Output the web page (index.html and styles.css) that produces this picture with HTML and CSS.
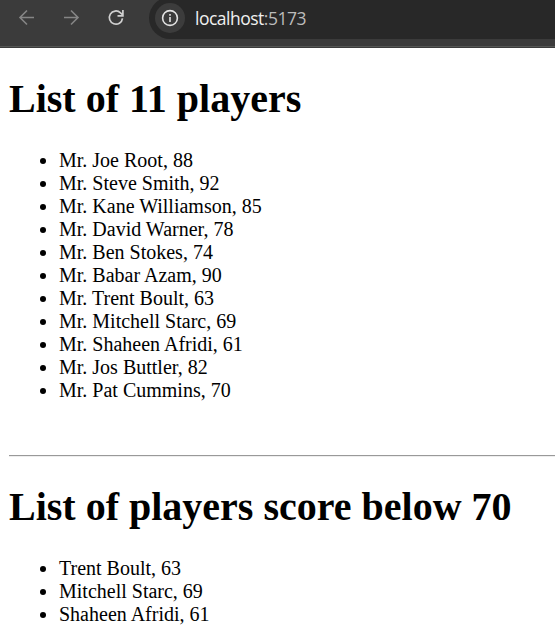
FILE: index.html
```html
<!DOCTYPE html>
<html lang="en">
<head>
<meta charset="utf-8">
<title>Players</title>
<link rel="stylesheet" href="styles.css">
</head>
<body>
<header class="toolbar">
  <svg class="nav" viewBox="0 0 20 20"><path d="M17 9.5H3M10 2.5l-7 7 7 7"/></svg>
  <svg class="nav" viewBox="0 0 20 20"><path d="M2 9.5h14M9 2.5l7 7-7 7"/></svg>
  <svg class="nav reload" viewBox="0 0 20 20"><path d="M16.5 10.4a6.6 6.6 0 1 1-2-5.6L16.7 7M16.9 2v5.8h-5.4"/></svg>
  <div class="address">
    <span class="info"><svg viewBox="0 0 20 20"><circle cx="10" cy="10" r="7.4"/><path d="M10 9v5M10 6v1.8"/></svg></span>
    <span class="url">localhost<span class="port">:5173</span></span>
  </div>
</header>
<main class="page">
  <h1>List of 11 players</h1>
  <ul>
    <li>Mr. Joe Root, 88</li>
    <li>Mr. Steve Smith, 92</li>
    <li>Mr. Kane Williamson, 85</li>
    <li>Mr. David Warner, 78</li>
    <li>Mr. Ben Stokes, 74</li>
    <li>Mr. Babar Azam, 90</li>
    <li>Mr. Trent Boult, 63</li>
    <li>Mr. Mitchell Starc, 69</li>
    <li>Mr. Shaheen Afridi, 61</li>
    <li>Mr. Jos Buttler, 82</li>
    <li>Mr. Pat Cummins, 70</li>
  </ul>
  <hr>
  <h1 class="second">List of players score below 70</h1>
  <ul>
    <li>Trent Boult, 63</li>
    <li>Mitchell Starc, 69</li>
    <li>Shaheen Afridi, 61</li>
  </ul>
</main>
</body>
</html>
```

FILE: styles.css
```css
body {
  margin: 0;
  height: 644px;
  overflow: hidden;
  background: #fff;
  color: #000;
  font: 20px/23px "Liberation Serif", "Times New Roman", serif;
}
.toolbar {
  display: flex;
  align-items: flex-start;
  height: 48px;
  background: linear-gradient(#3b3b3b 46px, #545654 46px, #545654 47px, #3b3b3b 47px);
}
.nav {
  width: 20px;
  height: 20px;
  margin: 8px 0 0 17px;
  fill: none;
  stroke: #858585;
  stroke-width: 1.6;
}
.nav + .nav { margin-left: 25px; }
.nav + .reload { margin-left: 24px; stroke: #d0d0d0; stroke-width: 1.7; }
.address {
  display: flex;
  align-items: center;
  flex: 1;
  height: 42px;
  margin: -3px 0 0 23px;
  border-radius: 21px 0 0 21px;
  background: #282828;
}
.info {
  display: flex;
  align-items: center;
  justify-content: center;
  width: 30px;
  height: 30px;
  margin-left: 6px;
  border-radius: 50%;
  background: #3c3c3c;
}
.info svg {
  width: 20px;
  height: 20px;
  fill: none;
  stroke: #e3e3e3;
  stroke-width: 1.6;
}
.url {
  margin-left: 10px;
  color: #f0f0f0;
  font: 17.5px/24px "Open Sans", sans-serif;
  letter-spacing: -0.5px;
}
.port { color: #bbb; }
.page { padding: 28px 0 0 9px; }
h1 {
  margin: 0;
  font-size: 40px;
  line-height: 46px;
  white-space: nowrap;
}
ul { margin: 27px 0 0; padding-left: 50px; }
hr { margin: 53px 0 0; border: 0; border-top: 1px solid #999; border-bottom: 1px solid #eee; }
.second { margin-top: 27px; }
```
